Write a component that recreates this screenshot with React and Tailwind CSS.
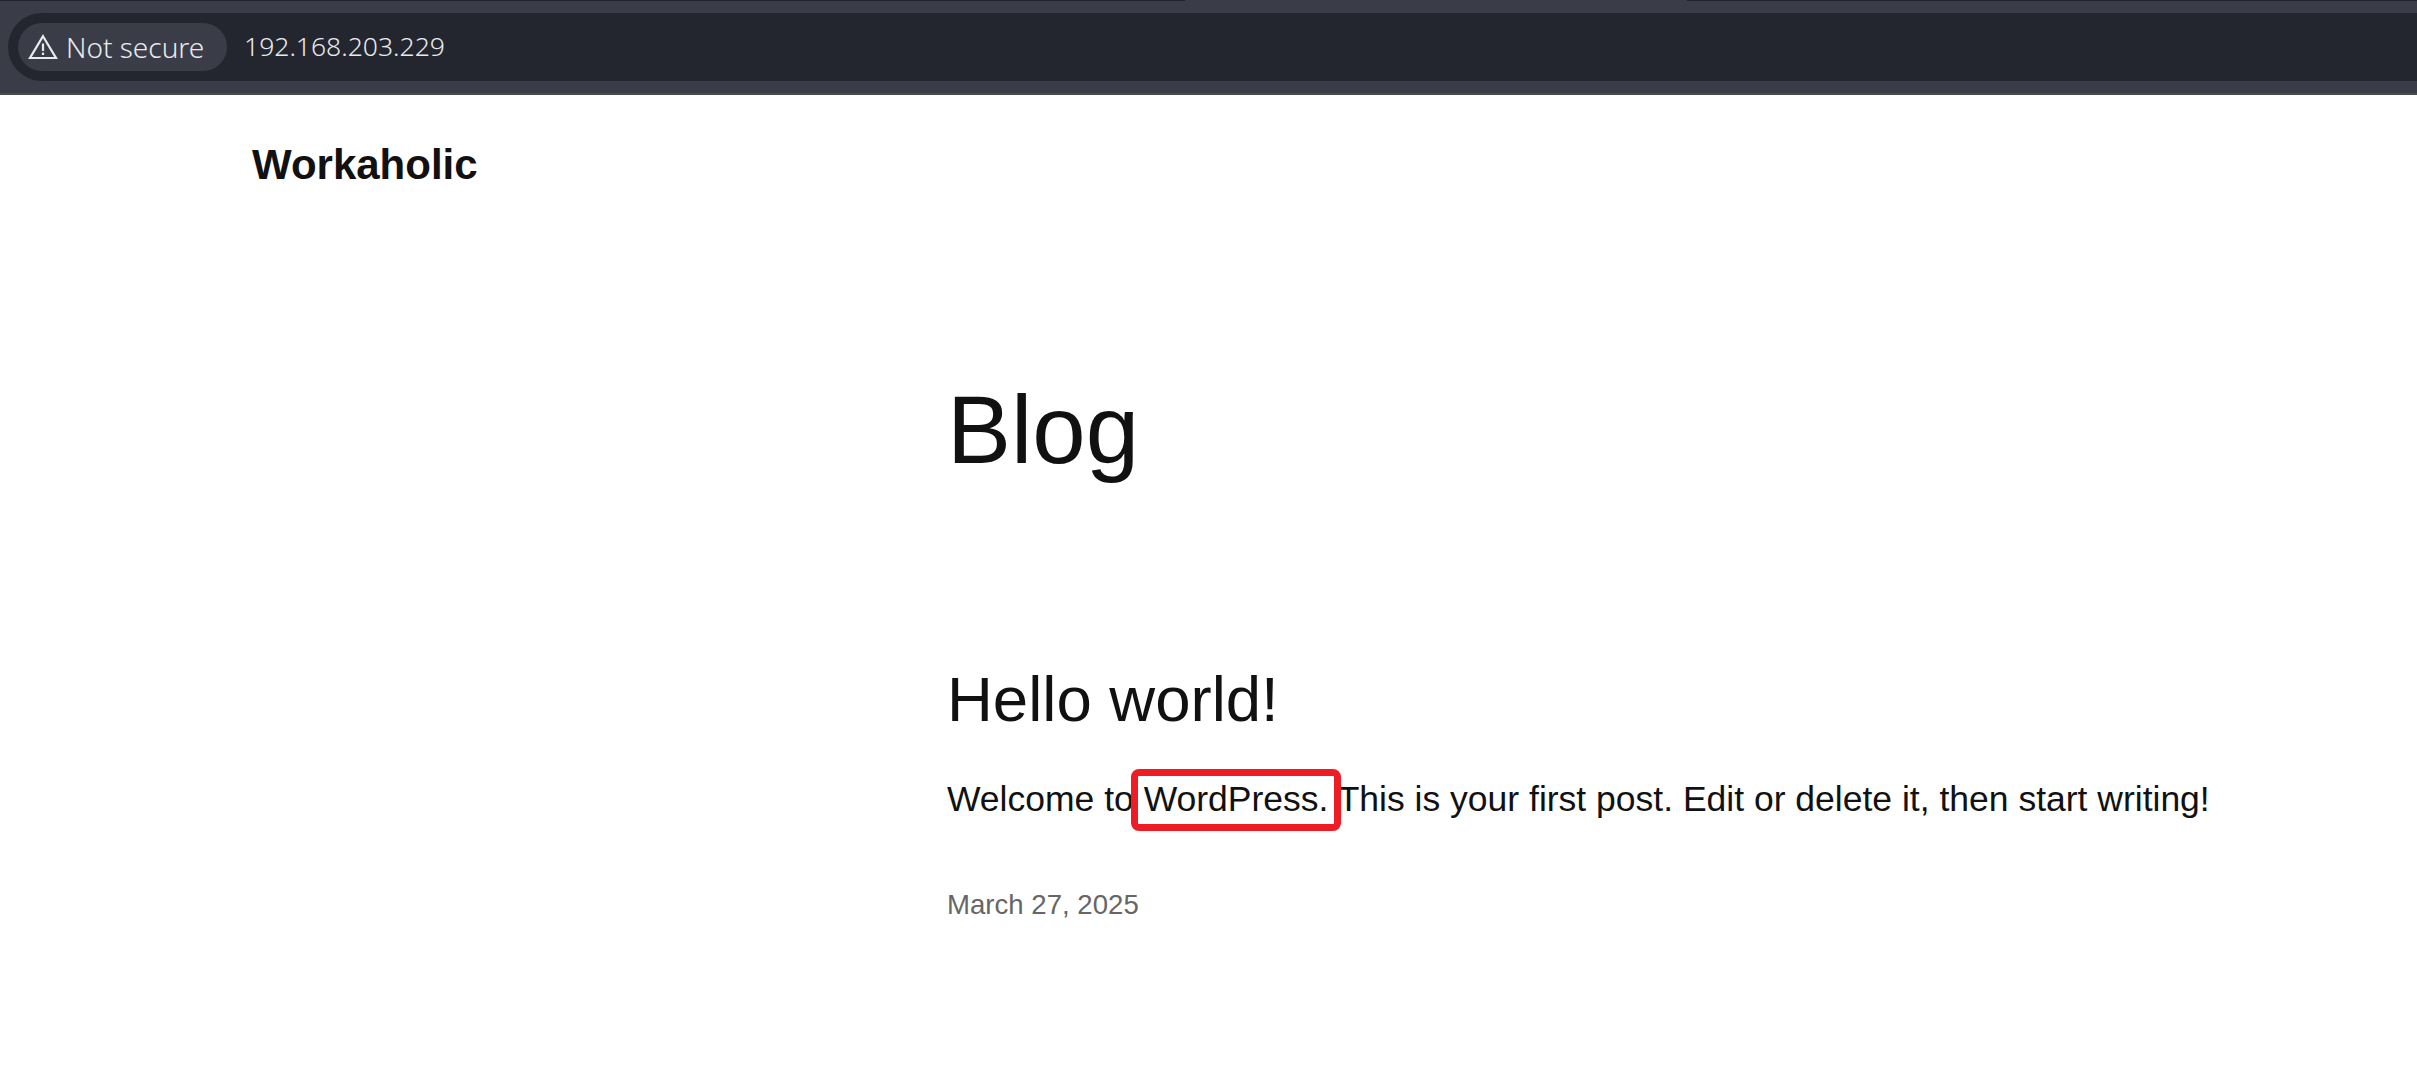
import React from "react";

function Warn() {
  return (
    <svg width="30" height="26" viewBox="0 0 30 26" fill="none" className="shrink-0">
      <path d="M15 2.2 L28 24 H2 Z" stroke="#e8eaed" strokeWidth="2.2" strokeLinejoin="miter" />
      <rect x="13.9" y="9.5" width="2.2" height="7.5" fill="#e8eaed" />
      <rect x="13.9" y="18.6" width="2.2" height="2.4" fill="#e8eaed" />
    </svg>
  );
}

export default function App() {
  return (
    <div className="bg-white min-h-[1079px] overflow-hidden font-['Liberation_Sans',sans-serif] text-[#111111]">
      <div className="bg-[#3a3d47] h-[95px] flex flex-col border-b-2 border-[#4b4b50]">
        <div className="flex h-px shrink-0">
          <div className="w-[1185px] bg-[#20232b]" />
          <div className="w-[502px]" />
          <div className="flex-1 bg-[#20232b]" />
        </div>
        <div className="mt-3 ml-2 h-[68px] rounded-l-[34px] bg-[#23262e] flex items-center pl-[10px] font-['Noto_Sans',sans-serif] font-light text-[#e8eaed]">
          <div className="h-[48px] w-[209px] rounded-[24px] bg-[#3a3d47] flex items-center pl-[10px] gap-[8px] text-[28px]">
            <Warn />
            <span>Not secure</span>
          </div>
          <span className="ml-[17px] text-[26.5px]">192.168.203.229</span>
        </div>
      </div>
      <header className="pl-[252px] pt-[45px]">
        <div className="text-[42px] leading-[50px] font-bold">Workaholic</div>
      </header>
      <main className="pl-[947px] pt-[185px]">
        <h1 className="text-[96px] leading-[110px]">Blog</h1>
        <h2 className="mt-[177px] text-[63.5px] leading-[74px]">Hello world!</h2>
        <p className="mt-[38px] text-[35.5px] leading-[50px] whitespace-nowrap">
          Welcome to{" "}
          <span className="relative">
            WordPress.
            <span className="absolute left-[-13px] right-[-13px] top-[-10px] bottom-[-12px] border-[7px] border-[#ee1c25] rounded-[8px]" />
          </span>{" "}
          This is your first post. Edit or delete it, then start writing!
        </p>
        <p className="mt-[63px] text-[27.6px] leading-[36px] text-[#666666]">March 27, 2025</p>
      </main>
    </div>
  );
}
